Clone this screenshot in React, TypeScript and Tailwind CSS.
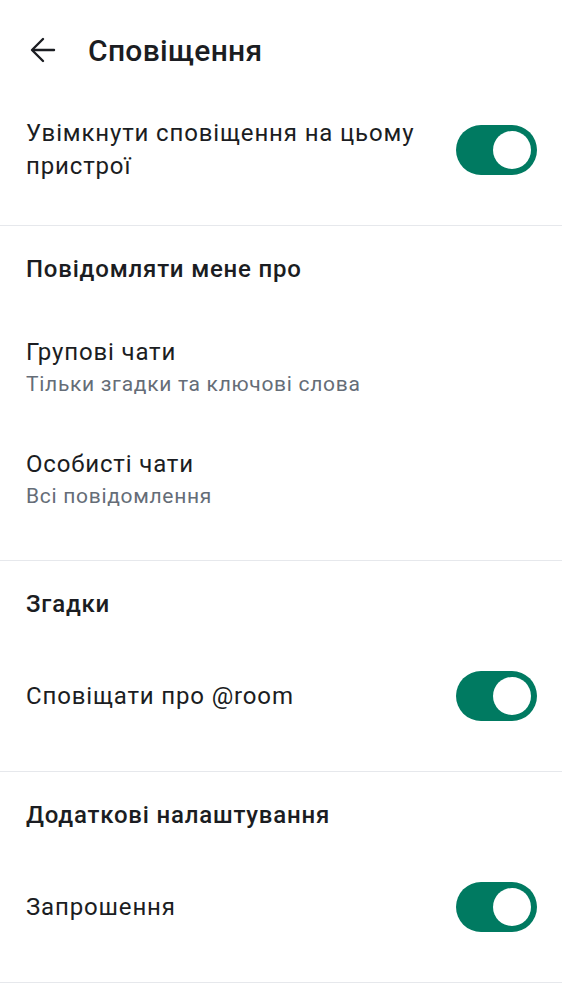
import { useState } from 'react';

const Toggle = ({ on, onChange }: { on: boolean; onChange: () => void }) => (
  <button
    onClick={onChange}
    className={`relative w-[81px] h-[50px] rounded-full shrink-0 transition-colors ${
      on ? 'bg-[#007a61]' : 'bg-[#c1c6cd]'
    }`}
  >
    <span
      className={`absolute top-[6px] w-[38px] h-[38px] rounded-full bg-white transition-all ${
        on ? 'left-[37px]' : 'left-[6px]'
      }`}
    />
  </button>
);

const Divider = () => <div className="h-px bg-[#e6e8ec]" />;

const SectionTitle = ({ children }: { children: string }) => (
  <div className="h-[86px] flex items-center px-[26px] text-[24px] font-medium tracking-[0.8px] text-[#1b1d22]">
    {children}
  </div>
);

export default function App() {
  const [device, setDevice] = useState(true);
  const [room, setRoom] = useState(true);
  const [invites, setInvites] = useState(true);

  return (
    <div className="w-[562px] h-[1000px] bg-white overflow-hidden font-['Roboto',sans-serif] text-[#1b1d22]">
      {/* Шапка */}
      <div className="h-[100px] flex items-center pl-[30px] gap-[32px]">
        <svg width="26" height="26" viewBox="0 0 26 26" fill="none" stroke="#1b1d22" strokeWidth="2.4" strokeLinecap="round" strokeLinejoin="round">
          <path d="M24 13H3" />
          <path d="M13 2 2 13l11 11" />
        </svg>
        <h1 className="text-[30px] font-medium tracking-[0.3px]">Сповіщення</h1>
      </div>

      {/* Увімкнути на пристрої */}
      <div className="h-[100px] flex items-center justify-between pl-[26px] pr-[25px]">
        <p className="text-[24px] leading-[33px] tracking-[0.85px] w-[400px]">
          Увімкнути сповіщення на цьому пристрої
        </p>
        <Toggle on={device} onChange={() => setDevice(!device)} />
      </div>
      <div className="h-[25px]" />
      <Divider />

      {/* Повідомляти мене про */}
      <SectionTitle>Повідомляти мене про</SectionTitle>
      <div className="h-[112px] flex flex-col justify-center px-[26px]">
        <span className="text-[24px] leading-[32px] tracking-[0.85px]">Групові чати</span>
        <span className="text-[21px] leading-[32px] tracking-[0.7px] text-[#656d77]">Тільки згадки та ключові слова</span>
      </div>
      <div className="h-[112px] flex flex-col justify-center px-[26px]">
        <span className="text-[24px] leading-[32px] tracking-[0.85px]">Особисті чати</span>
        <span className="text-[21px] leading-[32px] tracking-[0.7px] text-[#656d77]">Всі повідомлення</span>
      </div>
      <div className="h-[24px]" />
      <Divider />

      {/* Згадки */}
      <SectionTitle>Згадки</SectionTitle>
      <div className="h-[98px] flex items-center justify-between pl-[26px] pr-[25px]">
        <span className="text-[24px] tracking-[0.85px]">Сповіщати про @room</span>
        <Toggle on={room} onChange={() => setRoom(!room)} />
      </div>
      <div className="h-[26px]" />
      <Divider />

      {/* Додаткові налаштування */}
      <SectionTitle>Додаткові налаштування</SectionTitle>
      <div className="h-[98px] flex items-center justify-between pl-[26px] pr-[25px]">
        <span className="text-[24px] tracking-[0.85px]">Запрошення</span>
        <Toggle on={invites} onChange={() => setInvites(!invites)} />
      </div>
      <div className="h-[26px]" />
      <Divider />
    </div>
  );
}
